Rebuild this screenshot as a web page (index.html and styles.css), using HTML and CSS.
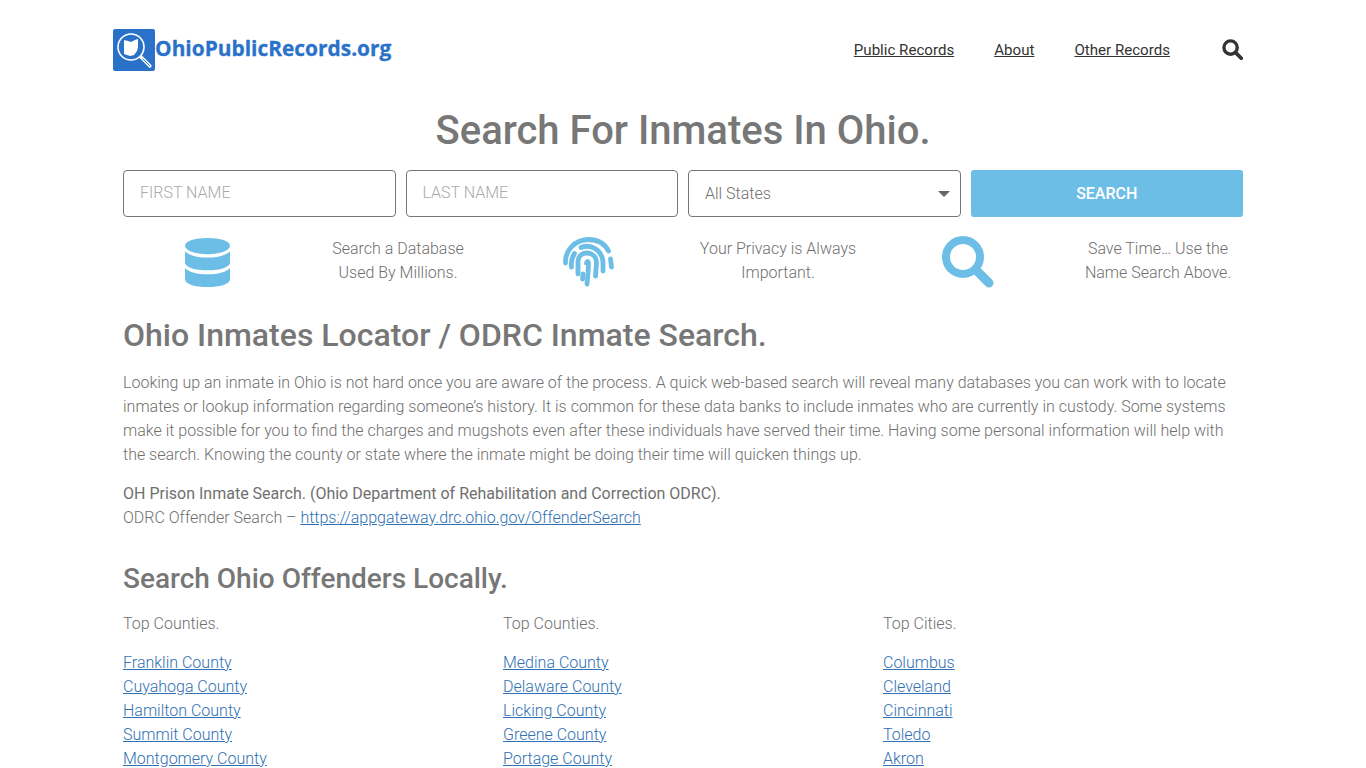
FILE: index.html
```html
<!DOCTYPE html>
<html lang="en">
<head>
    <title>Search For Inmates In Ohio</title>
    <link rel="stylesheet" href="styles.css">
</head>
<body>

<header class="site-header">
    <a class="logo" href="#">
        <svg class="logo-mark" viewBox="0 0 42 42" width="42" height="42">
            <rect width="42" height="42" rx="2" fill="#2a72c9"/>
            <path d="M11 11 L15 12 L18 13 L22 11 L25 10 L25 18 L24 22 L21 26 L17 27 L14 26 L11 25 Z" fill="#fff"/>
            <circle cx="18" cy="18" r="13" fill="none" stroke="#fff" stroke-width="1.600"/>
            <path d="M28 28 L37 37" stroke="#fff" stroke-width="3.200" stroke-linecap="round"/>
            <path d="M30 30 L36.500 36.500" stroke="#2a72c9" stroke-width="1" stroke-linecap="round"/>
        </svg>
        <span class="logo-text">OhioPublicRecords.org</span>
    </a>
    <nav class="main-nav">
        <a href="#">Public Records</a>
        <a href="#">About</a>
        <a href="#">Other Records</a>
        <svg class="nav-search" viewBox="0 0 24 24" width="21" height="21">
            <circle cx="9.800" cy="9.800" r="7.600" fill="none" stroke="#333" stroke-width="3.800"/>
            <path d="M15.600 15.600 L22 22" stroke="#333" stroke-width="4.200" stroke-linecap="round"/>
        </svg>
    </nav>
</header>

<main class="container">
    <h1>Search For Inmates In Ohio.</h1>

    <form class="search-form">
        <input type="text" placeholder="FIRST NAME">
        <input type="text" placeholder="LAST NAME">
        <div class="select-box">All States<span class="caret"></span></div>
        <button type="button">SEARCH</button>
    </form>

    <div class="features">
        <div class="feature-icon">
            <svg class="db-icon" viewBox="0 0 46 50" width="45" height="49">
                <path d="M0 8 C0 3 10 0 23 0 C36 0 46 3 46 8 C46 13 36 16.500 23 16.500 C10 16.500 0 13 0 8 Z" fill="#6dbee6"/>
                <path d="M0 13.500 C4 18 13 20 23 20 C33 20 42 18 46 13.500 V25 C46 30 36 33 23 33 C10 33 0 30 0 25 Z" fill="#6dbee6"/>
                <path d="M0 30.500 C4 35 13 37 23 37 C33 37 42 35 46 30.500 V42 C46 47 36 50 23 50 C10 50 0 47 0 42 Z" fill="#6dbee6"/>
            </svg>
        </div>
        <p>Search a Database<br>Used By Millions.</p>
        <div class="feature-icon">
            <svg viewBox="0 0 52 50" width="52" height="50" fill="none" stroke="#6dbee6" stroke-width="4.800" stroke-linecap="round">
                <path d="M3.500 26 C3 13 13 3 26 2.500 C36 2.500 43 7 46.500 14"/>
                <path d="M48.500 22 L49.500 30"/>
                <path d="M9.500 30 C9 25 10 20 12.500 16.500"/>
                <path d="M19 10.500 C29 6.500 40 13 41 25 L41 34"/>
                <path d="M16 37 L16 24 C16.500 13 34.500 13 34.500 26 L33.500 39"/>
                <path d="M24.500 26 C25 24 26.500 24 26.500 27 L26 36 L25 47"/>
                <path d="M21 37 L20.500 42"/>
            </svg>
        </div>
        <p>Your Privacy is Always<br>Important.</p>
        <div class="feature-icon">
            <svg viewBox="0 0 52 52" width="52" height="52" fill="none" stroke="#6dbee6">
                <circle cx="21" cy="21" r="17" stroke-width="8"/>
                <path d="M34 34 L47 47" stroke-width="9" stroke-linecap="round"/>
            </svg>
        </div>
        <p>Save Time&hellip; Use the<br>Name Search Above.</p>
    </div>

    <h2>Ohio Inmates Locator / ODRC Inmate Search.</h2>
    <p>Looking up an inmate in Ohio is not hard once you are aware of the process. A quick web-based search will reveal many databases you can work with to locate inmates or lookup information regarding someone&rsquo;s history. It is common for these data banks to include inmates who are currently in custody. Some systems make it possible for you to find the charges and mugshots even after these individuals have served their time. Having some personal information will help with the search. Knowing the county or state where the inmate might be doing their time will quicken things up.</p>
    <p><strong>OH Prison Inmate Search. (Ohio Department of Rehabilitation and Correction ODRC).</strong><br>
    ODRC Offender Search &ndash; <a href="#">https://appgateway.drc.ohio.gov/OffenderSearch</a></p>

    <h3>Search Ohio Offenders Locally.</h3>
    <div class="link-columns">
        <div class="link-col">
            <p>Top Counties.</p>
            <p>
                <a href="#">Franklin County</a><br>
                <a href="#">Cuyahoga County</a><br>
                <a href="#">Hamilton County</a><br>
                <a href="#">Summit County</a><br>
                <a href="#">Montgomery County</a>
            </p>
        </div>
        <div class="link-col">
            <p>Top Counties.</p>
            <p>
                <a href="#">Medina County</a><br>
                <a href="#">Delaware County</a><br>
                <a href="#">Licking County</a><br>
                <a href="#">Greene County</a><br>
                <a href="#">Portage County</a>
            </p>
        </div>
        <div class="link-col">
            <p>Top Cities.</p>
            <p>
                <a href="#">Columbus</a><br>
                <a href="#">Cleveland</a><br>
                <a href="#">Cincinnati</a><br>
                <a href="#">Toledo</a><br>
                <a href="#">Akron</a>
            </p>
        </div>
    </div>
</main>

</body>
</html>
```

FILE: styles.css
```css
body {
    font-family: Roboto, "Liberation Sans", sans-serif;
    font-size: 16px;
    font-weight: 300;
    line-height: 24px;
    color: #6f6f6f;
    margin: 0;
    background-color: #fff;
}
.site-header {
    width: 1130px;
    margin: 0 auto;
    padding-right: 10px;
    height: 100px;
    display: flex;
    justify-content: space-between;
    align-items: center;
}
.logo {
    display: flex;
    align-items: center;
    text-decoration: none;
}
.logo-text {
    font-family: "Open Sans", sans-serif;
    font-size: 20.900px;
    font-weight: 700;
    color: #2a72c9;
    -webkit-text-stroke: 0.3px #2a72c9;
    margin-bottom: 4px;
}
.main-nav {
    display: flex;
    align-items: center;
}
.main-nav a {
    color: #333;
    font-size: 15.100px;
    font-weight: 400;
    margin-right: 40px;
}
.main-nav a:nth-child(3) {
    margin-right: 52px;
}
.nav-search {
    margin-bottom: 1px;
}
.container {
    width: 1120px;
    margin: 0 auto;
}
h1 {
    font-size: 40px;
    line-height: 48px;
    font-weight: 500;
    color: #777;
    text-align: center;
    margin: 7px 0 15px;
}
.search-form {
    display: grid;
    grid-template-columns: repeat(4, 1fr);
    gap: 10px;
}
.search-form input,
.select-box {
    box-sizing: border-box;
    height: 47px;
    width: 100%;
    padding: 0 16px;
    border: 1px solid #777;
    border-radius: 4px;
    font-family: Roboto, sans-serif;
    font-size: 16px;
    font-weight: 300;
    color: #6f6f6f;
    background-color: #fff;
}
.search-form input {
    padding-bottom: 2px;
}
.search-form input::placeholder {
    color: #aaa;
}
.select-box {
    display: flex;
    align-items: center;
    justify-content: space-between;
    padding-right: 10px;
}
.caret {
    width: 0;
    height: 0;
    border-left: 6px solid transparent;
    border-right: 6px solid transparent;
    border-top: 6px solid #666;
}
.search-form button {
    height: 47px;
    border: none;
    border-radius: 3px;
    background-color: #6dbee6;
    color: #fff;
    font-family: Roboto, sans-serif;
    font-size: 16px;
    font-weight: 500;
    cursor: pointer;
}
.features {
    display: grid;
    grid-template-columns: repeat(6, 190px);
    margin: 18px -10px 0;
    height: 54px;
    align-items: center;
}
.features p {
    margin: 0;
    padding: 0 10px 2px;
    text-align: center;
}
.feature-icon {
    display: flex;
    justify-content: center;
}
.db-icon {
    margin-right: 1px;
}
h2 {
    font-size: 32px;
    line-height: 38px;
    font-weight: 500;
    color: #777;
    margin: 27px 0 17px;
}
h3 {
    font-size: 28px;
    line-height: 34px;
    font-weight: 500;
    color: #777;
    margin: 32px 0 16px;
}
p {
    margin: 0 0 15px;
}
strong {
    font-weight: 400;
}
a {
    color: #3070b3;
}
.link-columns {
    display: grid;
    grid-template-columns: repeat(3, 380px);
}
```
